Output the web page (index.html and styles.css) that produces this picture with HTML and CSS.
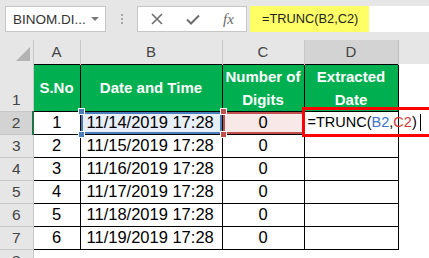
FILE: index.html
```html
<!DOCTYPE html>
<html lang="en">
<head>
  <meta charset="UTF-8">
  <title>TRUNC</title>
  <link rel="stylesheet" href="styles.css">
</head>
<body>

<!-- Pasek formuły -->
<div class="toolbar">
  <div class="namebox"><span>BINOM.DI...</span><span class="drop"></span></div>
  <div class="grip"><i></i><i></i><i></i></div>
  <div class="fbtns">
    <svg class="ico" width="12" height="12" viewBox="0 0 12 12"><path d="M1 1L11 11M11 1L1 11" stroke="#6e6e6e" stroke-width="1.6" fill="none"/></svg>
    <svg class="ico" width="14" height="11" viewBox="0 0 14 11"><path d="M1 5.5L5 9.5L13 1.5" stroke="#6e6e6e" stroke-width="2" fill="none"/></svg>
    <span class="fx">fx</span>
  </div>
  <div class="formula"><span class="hl">=TRUNC(B2,C2)</span></div>
</div>

<!-- Arkusz -->
<table class="sheet">
  <colgroup>
    <col class="w-rh"><col class="w-a"><col class="w-b"><col class="w-c"><col class="w-d"><col class="w-e">
  </colgroup>
  <tr class="r-head">
    <td class="corner"><span class="tri"></span></td>
    <td class="ch">A</td>
    <td class="ch">B</td>
    <td class="ch">C</td>
    <td class="ch sel">D</td>
    <td class="ch blank"></td>
  </tr>
  <tr class="r-title">
    <td class="rh bottom">1</td>
    <td class="gh">S.No</td>
    <td class="gh">Date and Time</td>
    <td class="gh">Number of Digits</td>
    <td class="gh">Extracted Date</td>
    <td class="e"></td>
  </tr>
  <tr class="r-data">
    <td class="rh active">2</td>
    <td class="c">1</td>
    <td class="l pick-b">11/14/2019 17:28</td>
    <td class="c pick-c">0</td>
    <td class="l edit">=TRUNC(<span class="ref-b">B2</span>,<span class="ref-c">C2</span>)<span class="caret"></span></td>
    <td class="e"></td>
  </tr>
  <tr class="r-data">
    <td class="rh">3</td><td class="c">2</td><td class="l">11/15/2019 17:28</td><td class="c">0</td><td></td><td class="e"></td>
  </tr>
  <tr class="r-data">
    <td class="rh">4</td><td class="c">3</td><td class="l">11/16/2019 17:28</td><td class="c">0</td><td></td><td class="e"></td>
  </tr>
  <tr class="r-data">
    <td class="rh">5</td><td class="c">4</td><td class="l">11/17/2019 17:28</td><td class="c">0</td><td></td><td class="e"></td>
  </tr>
  <tr class="r-data">
    <td class="rh">6</td><td class="c">5</td><td class="l">11/18/2019 17:28</td><td class="c">0</td><td></td><td class="e"></td>
  </tr>
  <tr class="r-data">
    <td class="rh">7</td><td class="c">6</td><td class="l">11/19/2019 17:28</td><td class="c">0</td><td></td><td class="e"></td>
  </tr>
  <tr class="r-data">
    <td class="rh">8</td><td class="e"></td><td class="e"></td><td class="e"></td><td class="e"></td><td class="e"></td>
  </tr>
</table>

</body>
</html>
```

FILE: styles.css
```css
html, body {
  margin: 0;
  overflow: hidden;
  background: #fff;
  font-family: 'Liberation Sans', Arial, sans-serif;
}
.toolbar {
  display: flex;
  align-items: flex-start;
  height: 40px;
  padding-top: 6px;
  box-sizing: border-box;
  background: #e6e6e6;
}
.namebox {
  margin-left: 5px;
  width: 101px;
  height: 26px;
  box-sizing: border-box;
  border: 1px solid #c6c6c6;
  background: #fff;
  display: flex;
  align-items: center;
  justify-content: space-between;
  padding: 0 6px 0 7px;
  font-size: 13.5px;
  color: #333;
}
.drop {
  width: 0;
  height: 0;
  border-left: 4px solid transparent;
  border-right: 4px solid transparent;
  border-top: 4px solid #7a7a7a;
}
.grip {
  width: 31px;
  height: 26px;
  display: flex;
  flex-direction: column;
  align-items: center;
  justify-content: center;
  gap: 2px;
}
.grip i {
  width: 2px;
  height: 2px;
  background: #a8a8a8;
}
.fbtns {
  width: 110px;
  height: 26px;
  box-sizing: border-box;
  border: 1px solid #c6c6c6;
  background: #fff;
  display: flex;
  align-items: center;
  padding-left: 13px;
}
.ico {
  display: block;
}
.ico + .ico {
  margin-left: 23px;
}
.fx {
  margin-left: 23px;
  font-family: 'Liberation Serif', serif;
  font-style: italic;
  font-size: 15px;
  color: #6a6a6a;
}
.formula {
  flex: 1;
  margin-left: 3px;
  height: 26px;
  background: #fff;
  display: flex;
}
.hl {
  width: 119px;
  box-sizing: border-box;
  padding-left: 12px;
  background: #ffff66;
  font-size: 12.8px;
  line-height: 26px;
  color: #222;
}

/* arkusz */
.sheet {
  border-collapse: collapse;
  table-layout: fixed;
  width: 429px;
}
.w-rh { width: 33px; }
.w-a { width: 47px; }
.w-b { width: 142px; }
.w-c { width: 82px; }
.w-d { width: 94px; }
.w-e { width: 31px; }
.sheet td {
  padding: 0;
  border: 1px solid #000;
  font-size: 16.5px;
  color: #000;
  white-space: nowrap;
  overflow: visible;
}
.r-head { height: 24px; }
.r-title { height: 46px; }
.r-data { height: 23px; }
.sheet td.corner {
  background: #e6e6e6;
  border: none;
  border-right: 1px solid #c8c8c8;
  text-align: right;
  vertical-align: bottom;
  line-height: 0;
}
.tri {
  display: inline-block;
  border-left: 14px solid transparent;
  border-bottom: 14px solid #b3b3b3;
  margin: 0 3px 3px 0;
}
.sheet td.ch {
  background: #e6e6e6;
  border: none;
  border-right: 1px solid #c8c8c8;
  text-align: center;
  font-size: 15px;
  color: #444;
}
.sheet td.ch.sel {
  background: #d3d3d3;
  border-right: 1px solid #bcbcbc;
}
.sheet td.ch.blank {
  border-right: none;
}
.sheet td.rh {
  background: #e6e6e6;
  border: none;
  border-bottom: 1px solid #c8c8c8;
  border-right: 1px solid #c8c8c8;
  text-align: center;
  font-size: 15.5px;
  color: #444;
}
.sheet td.rh.bottom {
  vertical-align: bottom;
  padding-bottom: 2px;
}
.sheet td.rh.active {
  background: #d3d3d3;
  border-right: 2px solid #217346;
}
.sheet td.gh {
  background: #00b050;
  color: #fff;
  font-weight: bold;
  font-size: 15px;
  line-height: 23px;
  text-align: center;
  white-space: normal;
}
.sheet td.e {
  border: none;
  background: #fff;
}
.c { text-align: center; }
.l { padding-left: 6px !important; }

/* zaznaczenia */
.pick-b, .pick-c, .edit {
  position: relative;
}
.pick-b {
  background: #e9eff8;
  box-shadow: inset 0 0 0 2px #4a7ebb;
}
.pick-c {
  background: #f8e8e8;
  box-shadow: inset 0 0 0 2px #c0504d;
}
.pick-b::before, .pick-b::after,
.pick-c::before, .pick-c::after {
  content: "";
  position: absolute;
  left: -3px;
  width: 5px;
  height: 5px;
  background: #4a7ebb;
  border: 1px solid #fff;
}
.pick-b::before, .pick-c::before { top: -4px; }
.pick-b::after, .pick-c::after { bottom: -4px; }
.pick-c::before, .pick-c::after {
  background: #c0504d;
}
.sheet td.edit {
  font-size: 14.5px;
  padding-left: 3px !important;
}
.edit::before {
  content: "";
  position: absolute;
  left: -3px;
  top: -5px;
  bottom: -3px;
  width: 130px;
  border: 3px solid #f00;
}
.ref-b { color: #3e70c8; }
.ref-c { color: #d1393a; }
.caret {
  display: inline-block;
  width: 1px;
  height: 17px;
  background: #000;
  margin-left: 3px;
  vertical-align: -4px;
}
```
